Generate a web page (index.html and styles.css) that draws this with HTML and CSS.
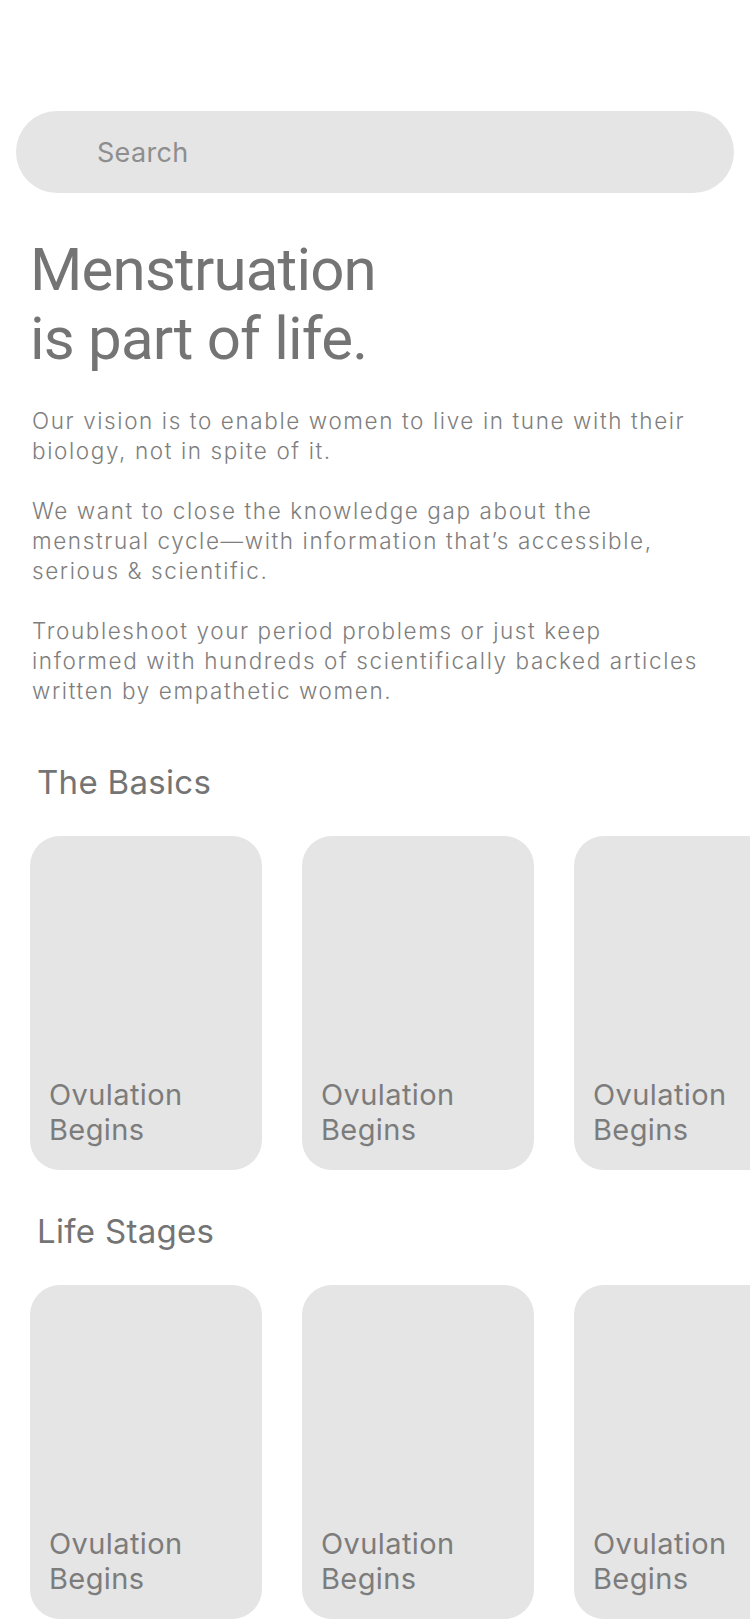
FILE: index.html
```html
<!DOCTYPE html>
<html lang="en">
<head>
<meta charset="utf-8">
<title>Menstruation is part of life</title>
<link rel="stylesheet" href="styles.css">
</head>
<body>
<main class="page">
  <div class="search"><span class="search-text">Search</span></div>
  <section class="hero">
    <h1 class="title">Menstruation<br>is part of life.</h1>
    <p class="intro">Our vision is to enable women to live in tune with their biology, not in spite of it.</p>
    <p class="intro">We want to close the knowledge gap about the menstrual cycle—with information that’s accessible, serious &amp; scientific.</p>
    <p class="intro">Troubleshoot your period problems or just keep informed with hundreds of scientifically backed articles written by empathetic women.</p>
  </section>
  <section class="group">
    <h2 class="group-title">The Basics</h2>
    <div class="row">
      <div class="card"><span class="card-title">Ovulation<br>Begins</span></div>
      <div class="card"><span class="card-title">Ovulation<br>Begins</span></div>
      <div class="card"><span class="card-title">Ovulation<br>Begins</span></div>
    </div>
  </section>
  <section class="group">
    <h2 class="group-title">Life Stages</h2>
    <div class="row">
      <div class="card"><span class="card-title">Ovulation<br>Begins</span></div>
      <div class="card"><span class="card-title">Ovulation<br>Begins</span></div>
      <div class="card"><span class="card-title">Ovulation<br>Begins</span></div>
    </div>
  </section>
</main>
</body>
</html>
```
FILE: styles.css
```css
html, body {
  margin: 0;
  padding: 0;
  background: #ffffff;
}
body {
  font-family: Inter, Roboto, "Liberation Sans", sans-serif;
  color: #767676;
  width: 750px;
  overflow: hidden;
}
.page {
  padding-top: 111px;
}
.search {
  margin: 0 16px;
  height: 82px;
  border-radius: 41px;
  background: #e5e5e5;
  display: flex;
  align-items: center;
  padding-left: 81px;
}
.search-text {
  font-size: 27px;
  letter-spacing: 0.3px;
  color: #8e8e8e;
}
.hero {
  padding: 0 30px;
}
.title {
  margin: 42px 0 0 0;
  font-family: Roboto, "Liberation Sans", sans-serif;
  font-weight: 400;
  font-size: 60px;
  line-height: 69px;
  letter-spacing: -0.8px;
  color: #747474;
}
.intro {
  margin: 0;
  padding-left: 2px;
  max-width: 677px;
  font-size: 22.5px;
  line-height: 30px;
  letter-spacing: 1.6px;
  font-weight: 300;
  color: #7e7e7e;
}
.intro + .intro {
  margin-top: 30px;
}
.intro:first-of-type {
  margin-top: 33px;
}
.group {
  margin-top: 56px;
}
.group + .group {
  margin-top: 41px;
}
.group-title {
  margin: 0 0 0 37px;
  font-weight: 400;
  font-size: 33px;
  line-height: 40px;
  letter-spacing: 0.3px;
  color: #747474;
}
.row {
  display: flex;
  gap: 40px;
  padding-left: 30px;
  margin-top: 34px;
  overflow: hidden;
}
.card {
  flex: 0 0 232px;
  height: 334px;
  border-radius: 30px;
  background: #e5e5e5;
  display: flex;
  align-items: flex-end;
  padding: 0 18px 23px 19px;
  box-sizing: border-box;
}
.card-title {
  font-size: 29px;
  line-height: 35px;
  letter-spacing: 0.4px;
  color: #7c7c7c;
}
```
